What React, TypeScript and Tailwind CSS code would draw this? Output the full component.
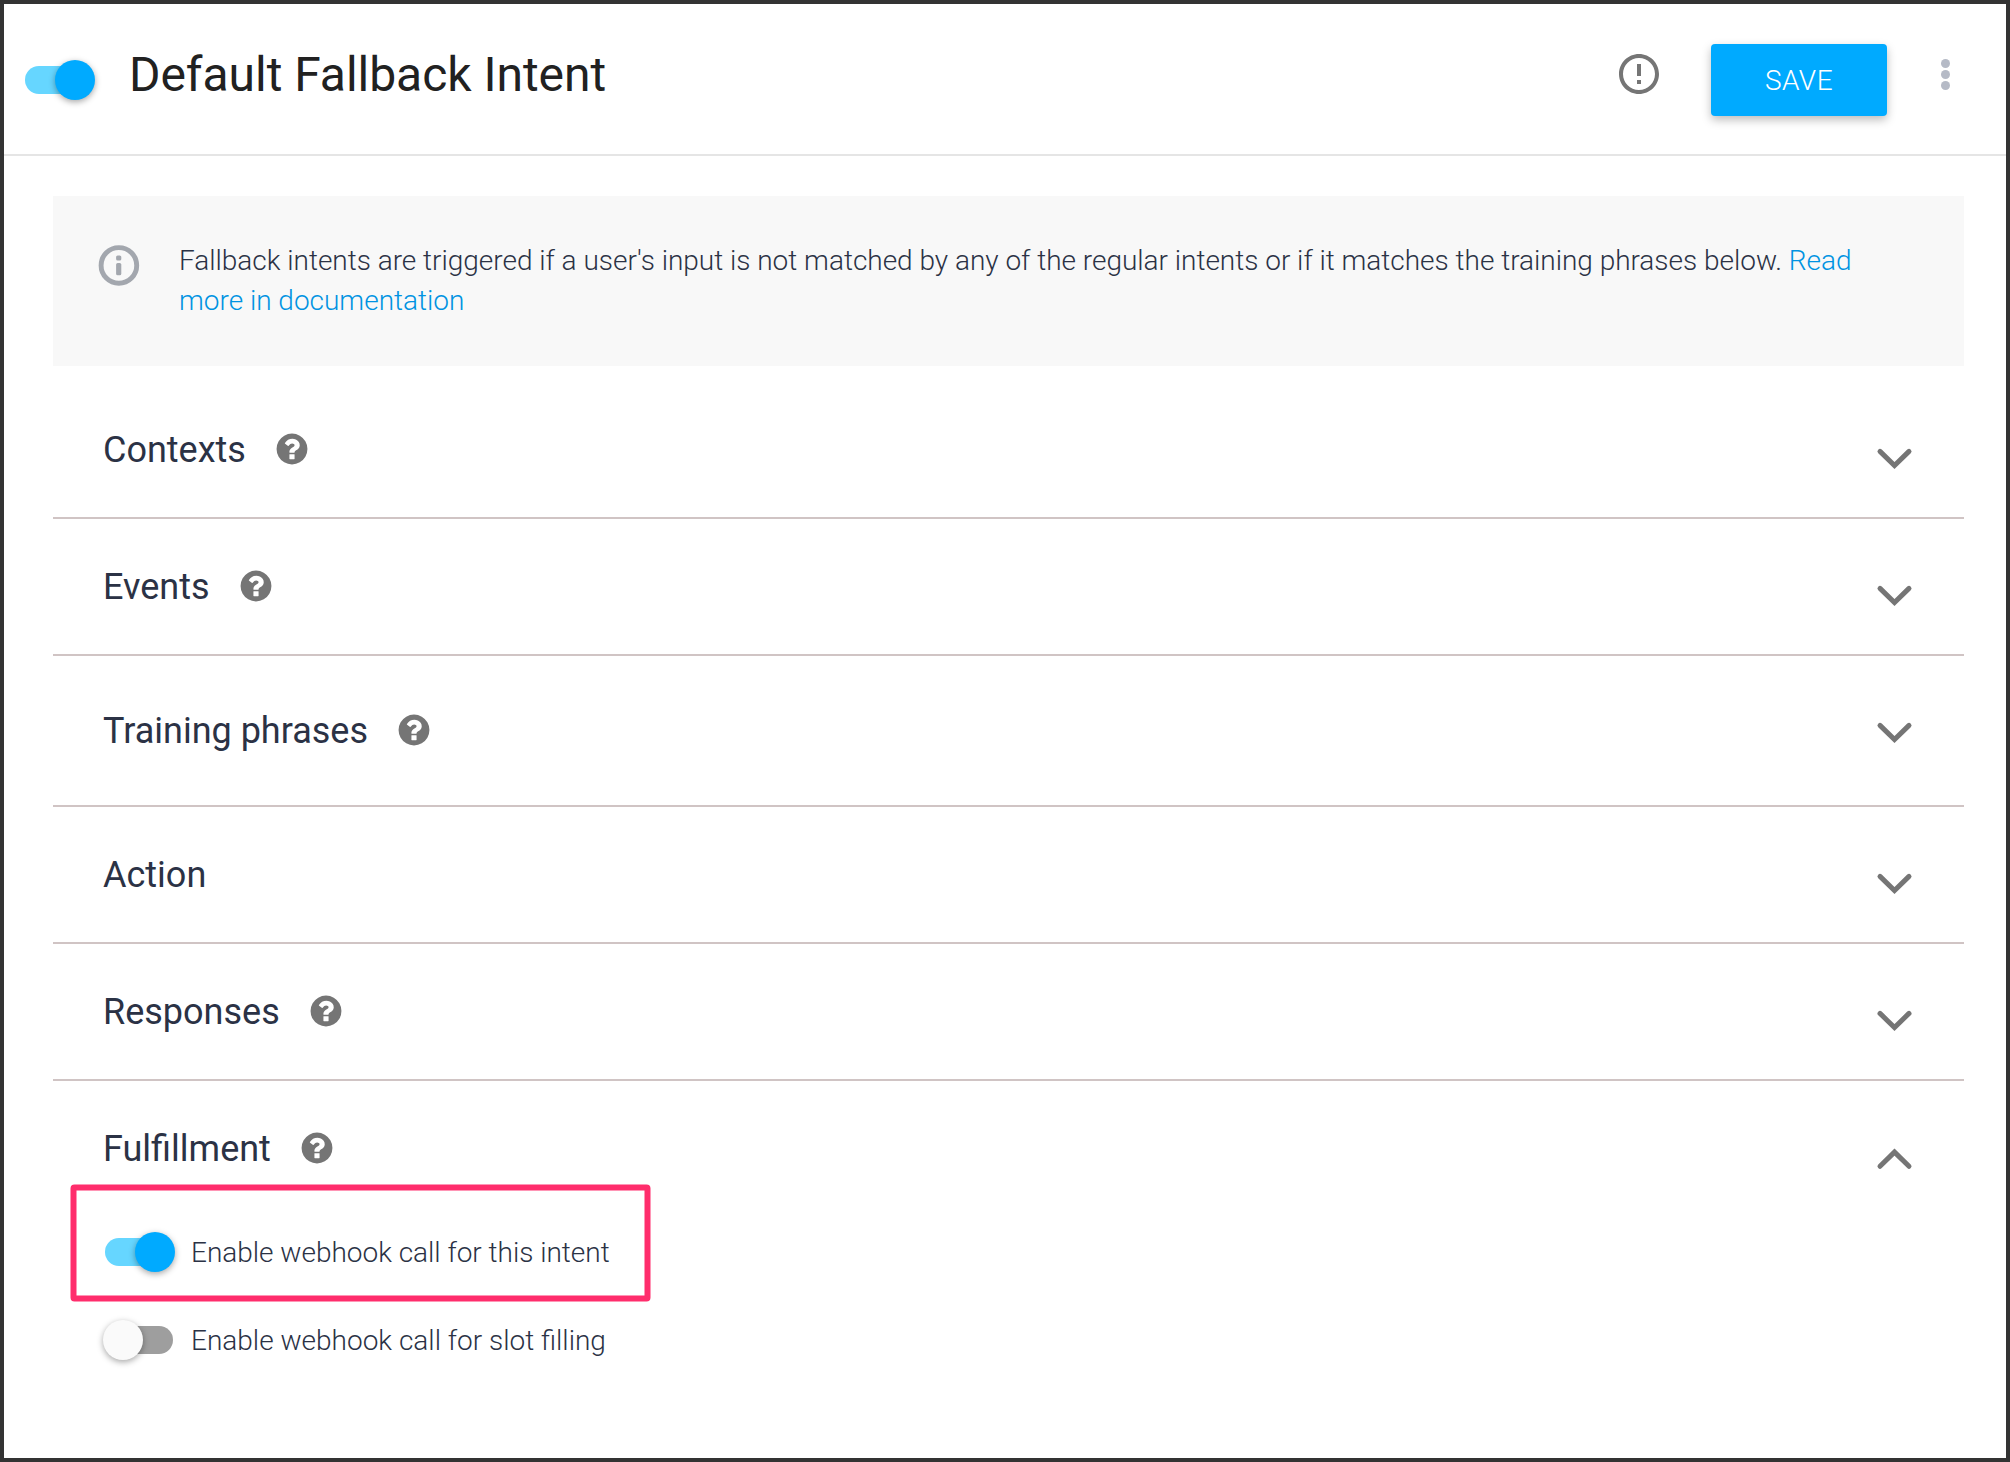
import React from "react";

const HelpIcon = () => (
  <svg viewBox="0 0 1792 1792" className="mb-0.5 h-9 w-9 shrink-0" fill="#757575">
    <path d="M1024 1376v-192q0-14-9-23t-23-9h-192q-14 0-23 9t-9 23v192q0 14 9 23t23 9h192q14 0 23-9t9-23zM1280 704q0-88-55.5-163t-138.5-116-170-41q-243 0-371 213-15 24 8 42l132 100q7 6 19 6 16 0 25-12 53-68 86-92 34-24 86-24 48 0 85.5 26t37.5 59q0 38-20 61t-68 45q-63 28-115.5 86.5t-52.5 125.5v36q0 14 9 23t23 9h192q14 0 23-9t9-23q0-19 21.5-49.5t54.5-49.5q32-18 49-28.5t46-35 44.5-48 28-60.5 12.5-81zM1664 896q0 209-103 385.5t-279.5 279.5-385.5 103-385.5-103-279.5-279.5-103-385.5 103-385.5 279.5-279.5 385.5-103 385.5 103 279.5 279.5 103 385.5z" />
  </svg>
);

const Chevron = ({ up }: { up?: boolean }) => (
  <svg viewBox="0 0 36 20" className="h-5 w-9 overflow-visible" fill="none" stroke="#757575" strokeWidth="5" strokeLinecap="round">
    <path d={up ? "M4 17.3 18.5 3.1 33 17.3" : "M4 2.4 18.5 16.6 33 2.4"} />
  </svg>
);

const Switch = ({ on }: { on?: boolean }) => (
  <div className="relative flex h-10 w-[72px] shrink-0 items-center px-0.5">
    <div className={on ? "h-7 w-[68px] rounded-full bg-[#66d6ff]" : "h-7 w-[68px] rounded-full bg-[#9e9e9e]"} />
    <div
      className={
        on
          ? "absolute top-0 right-0 size-10 rounded-full bg-[#00aaff] shadow-[0_2px_6px_rgba(0,0,0,0.35)]"
          : "absolute top-0 left-0 size-10 rounded-full bg-[#fafafa] shadow-[0_2px_6px_rgba(0,0,0,0.35)]"
      }
    />
  </div>
);

type SectionProps = { title: string; help?: boolean; className: string; chevron: string; open?: boolean };

const Section = ({ title, help, className, chevron, open }: SectionProps) => (
  <div className={`flex items-start justify-between pr-[52px] pl-[50px] ${className}`}>
    <div className="flex items-center gap-7">
      <h2 className="text-[36px] leading-[42px] text-[#2b3245]">{title}</h2>
      {help && <HelpIcon />}
    </div>
    <div className={chevron}>
      <Chevron up={open} />
    </div>
  </div>
);

const row = "h-[137px] border-b-2 border-[#d0c4c4] pt-[47px]";

export default function App() {
  return (
    <div className="h-[1462px] w-[2010px] border-4 border-[#333] bg-white font-[Roboto,sans-serif]">
      <header className="flex h-[152px] items-start border-b-2 border-[#e5e5e5] pl-[19px]">
        <div className="pt-14">
          <Switch on />
        </div>
        <h1 className="ml-[34px] pt-[43px] text-[48px] leading-[56px] tracking-[-0.04px] text-[#212121]">Default Fallback Intent</h1>
        <svg viewBox="0 0 24 24" className="mt-[46px] mr-[48px] ml-auto size-12" fill="#757575">
          <path d="M11 15h2v2h-2zm0-8h2v6h-2zm.99-5C6.47 2 2 6.48 2 12s4.47 10 9.99 10C17.52 22 22 17.52 22 12S17.52 2 11.99 2zM12 20c-4.42 0-8-3.58-8-8s3.58-8 8-8 8 3.58 8 8-3.58 8-8 8z" />
        </svg>
        <button className="mt-10 flex h-[72px] w-44 items-center justify-center rounded-[4px] bg-[#00aaff] pt-0.5 text-[28px] font-light tracking-[0.5px] text-white shadow-[0_4px_10px_rgba(0,0,0,0.26)]">
          SAVE
        </button>
        <div className="mt-[55px] mr-[56px] ml-[54px] flex flex-col gap-[2px]">
          <i className="size-[9px] rounded-full bg-[#b5bac6]" />
          <i className="size-[9px] rounded-full bg-[#b5bac6]" />
          <i className="size-[9px] rounded-full bg-[#b5bac6]" />
        </div>
      </header>

      <main className="pt-10 pr-[42px] pl-[49px]">
        <div className="flex h-[170px] items-start bg-[#f8f8f8] pr-20 pl-[45px]">
          <svg viewBox="0 0 42 42" className="mt-[48px] size-[42px] shrink-0" fill="none">
            <circle cx="20.9" cy="21.4" r="17.8" stroke="#a3a7ae" strokeWidth="4.9" />
            <rect x="18.1" y="11.4" width="5.2" height="5.2" rx="1.6" fill="#a3a7ae" />
            <rect x="18.1" y="19" width="5.2" height="12.3" rx="1.6" fill="#a3a7ae" />
          </svg>
          <p className="ml-[39px] pt-[45px] text-[28px] leading-[40px] font-light tracking-[-0.018px] text-[#2b3245]">
            Fallback intents are triggered if a user's input is not matched by any of the regular intents or if it
            matches the training phrases below. <a className="text-[#0093e2]">Read<br />more in documentation</a>
          </p>
        </div>

        <Section title="Contexts" help className="h-[153px] border-b-2 border-[#d0c4c4] pt-[63px]" chevron="mt-5" />
        <Section title="Events" help className={row} chevron="mt-5" />
        <Section title="Training phrases" help className="h-[151px] border-b-2 border-[#d0c4c4] pt-[54px]" chevron="mt-[13px]" />
        <Section title="Action" className={row} chevron="mt-5" />
        <Section title="Responses" help className={row} chevron="mt-5" />
        <Section title="Fulfillment" help open className="h-[103px] pt-[47px]" chevron="mt-[21px]" />

        <div className="relative ml-[17px] flex h-[117px] w-[580px] items-start pt-12 pl-[33px]">
          <div className="absolute inset-0 translate-x-[0.5px] translate-y-[0.5px] rounded-[4px] border-[6px] border-[#ff2d6c]" />
          <Switch on />
          <span className="ml-4 pt-px text-[28px] leading-[40px] font-light tracking-[-0.018px] text-[#2b3245]">Enable webhook call for this intent</span>
        </div>
        <div className="mt-[19px] ml-[50px] flex items-start">
          <Switch />
          <span className="ml-4 pt-px text-[28px] leading-[40px] font-light text-[#2b3245]">Enable webhook call for slot filling</span>
        </div>
      </main>
    </div>
  );
}
